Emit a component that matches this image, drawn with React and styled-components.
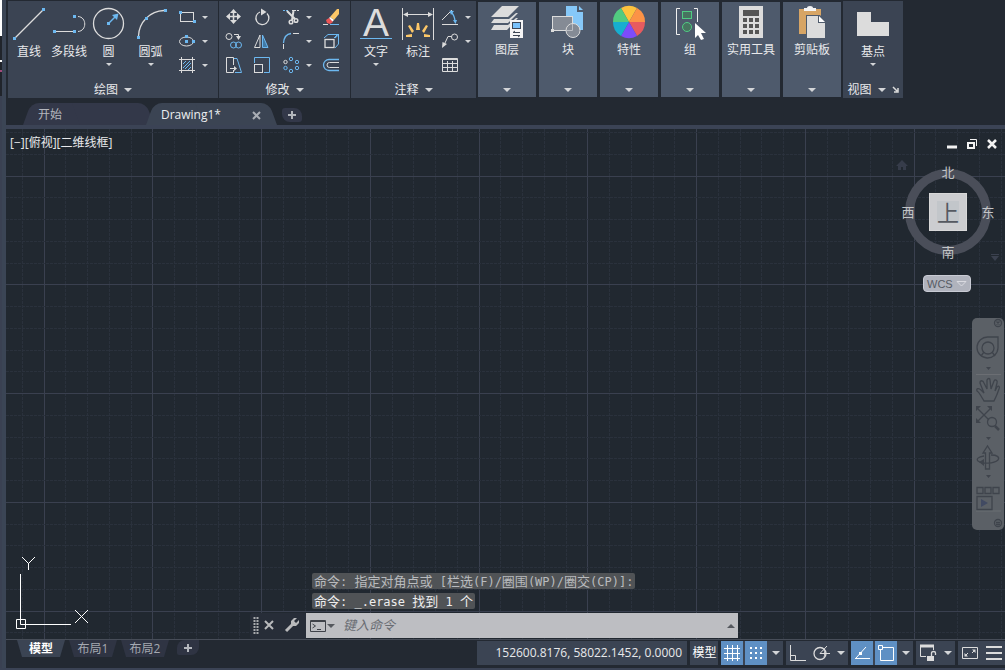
import { useEffect, useRef, useState } from "react";
import styled, { createGlobalStyle } from "styled-components";

const blue = "#6cb8f0";
const white = "#dcdcdc";

function Icon({ box, children }) {
  const [, , width, height] = box.split(" ");
  return (
    <svg width={width} height={height} viewBox={box} fill="none" stroke={white} aria-hidden="true">
      {children}
    </svg>
  );
}

// small blue grip points, centred on each pair
function Grips({ at }) {
  return at.map(([x, y]) => (
    <rect key={`${x}-${y}`} x={x - 1} y={y - 1} width="3" height="3" fill={blue} stroke="none" />
  ));
}

function LineIcon() {
  return (
    <Icon box="12 6 34 34">
      <path d="M15 38L43 10" strokeWidth="1.3" />
      <Grips at={[[14, 38], [43, 9]]} />
    </Icon>
  );
}

function PolylineIcon() {
  return (
    <Icon box="52 6 34 34">
      <path d="M55 31.5H74M78 16.5C87 17 87 31 78 31.5" />
      <Grips at={[[54, 31], [74, 31], [74, 16]]} />
    </Icon>
  );
}

function CircleIcon() {
  return (
    <Icon box="92 6 34 34">
      <circle cx="108.5" cy="23.5" r="15" strokeWidth="1.3" />
      <path d="M109 23L115 17" stroke={blue} strokeWidth="1.5" />
      <path d="M118.500 13.500L117 20L112 15Z" fill={blue} stroke="none" />
      <Grips at={[[108, 23]]} />
    </Icon>
  );
}

function ArcIcon() {
  return (
    <Icon box="134 6 34 34">
      <path d="M138.500 36C139 22 150 11 164 10.500" strokeWidth="1.3" />
      <Grips at={[[138, 37], [146, 18], [165, 10]]} />
    </Icon>
  );
}

function RectIcon() {
  return (
    <Icon box="178 8 18 18">
      <rect x="180.5" y="12.500" width="13" height="9" />
      <Grips at={[[180, 12], [194, 21]]} />
    </Icon>
  );
}

function EllipseIcon() {
  return (
    <Icon box="178 32 18 18">
      <ellipse cx="186.5" cy="41.500" rx="7" ry="4.5" />
      <Grips at={[[186, 36], [186, 41], [193, 41]]} />
    </Icon>
  );
}

function HatchIcon() {
  return (
    <Icon box="178 56 18 18">
      <path d="M179 59.500H195M179 70.500H195M181.500 57V73M192.500 57V73" />
      <path d="M183 64L186 61M183 68L190 61M185 69L191 63M188 70L191 67" stroke={blue} />
    </Icon>
  );
}

function MoveIcon() {
  return (
    <Icon box="223 8 18 18">
      <path d="M227 16.500H238M232.500 11V22" strokeWidth="1.5" />
      <path
        d="M232.500 9L236 13H229ZM232.500 24L236 20H229ZM225 16.500L229 13V20ZM240 16.500L236 13V20Z"
        fill={white}
        stroke="none"
      />
    </Icon>
  );
}

function RotateIcon() {
  return (
    <Icon box="252 8 18 18">
      <path d="M267 13.500A6.500 6.500 0 1 1 260 12" strokeWidth="1.300" />
      <path d="M261 8.500L266.500 12L261 15.500Z" fill={white} stroke="none" />
    </Icon>
  );
}

function TrimIcon() {
  return (
    <Icon box="282 8 18 18">
      <path d="M283 10.500H289" strokeDasharray="2 1" stroke={blue} />
      <path d="M292 10.500H299" strokeDasharray="4 1" />
      <path d="M287 11L295 19M293.500 11L292 20" strokeWidth="2" />
      <circle cx="291" cy="22" r="1.800" strokeWidth="1.500" />
      <circle cx="296" cy="20.500" r="1.800" strokeWidth="1.500" />
    </Icon>
  );
}

function EraseIcon() {
  return (
    <Icon box="323 8 18 18">
      <path d="M324 24.500H329" stroke={white} />
      <path d="M331 24.500H340" stroke={blue} />
      <path d="M331 17L338 9H340V14L335 20Z" fill="#fcc768" stroke="none" />
      <path d="M330 18L331 17L335 20L333 22Z" fill="#fff" stroke="none" />
      <path d="M327 20L330 18L334 22L331 24L328 23Z" fill="#ee5555" stroke="none" />
    </Icon>
  );
}

function CopyIcon() {
  return (
    <Icon box="223 32 18 18">
      <circle cx="228" cy="36.500" r="3" />
      <path d="M233 34.500H237.500V37" />
      <path d="M235 36H240L237.500 40Z" fill={white} stroke="none" />
      <circle cx="232.500" cy="45" r="3" stroke={blue} />
      <circle cx="237.500" cy="45" r="3" stroke={blue} />
    </Icon>
  );
}

function MirrorIcon() {
  return (
    <Icon box="252 32 18 18">
      <path d="M254.500 47.500L260 35V47.500Z" />
      <path d="M268 47.500L262.500 35V47.500Z" stroke={blue} fill="#4179a5" />
    </Icon>
  );
}

function FilletIcon() {
  return (
    <Icon box="282 32 18 18">
      <path d="M283.500 43C284 37 287 34 291 33.500" stroke={blue} strokeWidth="1.300" />
      <path d="M293 33.500H299M283.500 44V49" />
    </Icon>
  );
}

function ExplodeIcon() {
  return (
    <Icon box="323 32 18 18">
      <path d="M325 38L329 34.500H340L336 38M339.500 35V44L336 48M335 38L338 35" stroke={blue} />
      <rect x="326" y="39.500" width="9" height="8" strokeWidth="1.300" />
    </Icon>
  );
}

function StretchIcon() {
  return (
    <Icon box="223 56 18 18">
      <path d="M232.500 65V57.500H225.500V72.500H232.500V70" />
      <path d="M233 58.500H236L240.500 72.500H234" stroke={blue} />
      <path d="M229 68.500H234" />
      <path d="M233 66L236 68.500L233 71Z" fill={white} stroke="none" />
    </Icon>
  );
}

function ScaleIcon() {
  return (
    <Icon box="252 56 18 18">
      <path d="M254.500 63V57.500H269.500V72.500H264" stroke={blue} />
      <rect x="254.500" y="64.500" width="8" height="8" />
    </Icon>
  );
}

function ArrayIcon() {
  return (
    <Icon box="282 56 18 18">
      <circle cx="285.500" cy="62" r="1.700" />
      {[[291, 59], [297, 62], [297, 68], [291, 71], [285.5, 68]].map(([x, y]) => (
        <circle key={`${x}-${y}`} cx={x} cy={y} r="1.700" stroke={blue} />
      ))}
    </Icon>
  );
}

function OffsetIcon() {
  return (
    <Icon box="323 56 18 18">
      <path d="M340 59.500H330A5.500 5.500 0 0 0 330 70.500H340" stroke={blue} strokeWidth="1.300" />
      <path d="M340 62.500H330.500A2.500 2.500 0 0 0 330.500 67.500H340" />
    </Icon>
  );
}

function TextIcon() {
  return (
    <Icon box="359 6 34 34">
      <text x="376" y="36" fontSize="39" textAnchor="middle" fontFamily="Liberation Sans, sans-serif" fill={white} stroke="none">
        A
      </text>
      <path d="M360 38.500H392" stroke={blue} />
    </Icon>
  );
}

function DimensionIcon() {
  return (
    <Icon box="401 6 34 34">
      <path d="M402.500 8V40M433.500 8V40M404 14.500H432" />
      <path d="M403 14.500L408 12V17ZM433 14.500L428 12V17Z" fill={white} stroke="none" />
      <path
        d="M417 23H419L420 30H416ZM408 26L410 25L414 31L412 33ZM428 26L426 25L422 31L424 33ZM406 35L412 34V37H406ZM430 35L424 34V37H430Z"
        fill="#fcc768"
        stroke="none"
      />
    </Icon>
  );
}

function AngleIcon() {
  return (
    <Icon box="441 8 18 18">
      <path d="M442 24.500H458M442 20L452 10" />
      <path d="M451 12C454 15 455 18 455 22" stroke={blue} strokeWidth="1.300" />
      <path d="M449.500 10.500L454 11L451 15ZM453 20H457L455.500 24Z" fill={blue} stroke="none" />
    </Icon>
  );
}

function LeaderIcon() {
  return (
    <Icon box="441 32 18 18">
      <circle cx="454.500" cy="37" r="3" />
      <path d="M451.500 36.500H448L444.500 44" />
      <path d="M442 48L442.500 42L447 44Z" fill={white} stroke="none" />
    </Icon>
  );
}

function TableIcon() {
  return (
    <Icon box="441 56 18 18">
      <path d="M442.500 58.500H457.500V71.500H442.500ZM442 59.500H458M442 63.500H458M442 67.500H458M447.500 61V71M452.500 61V71" />
    </Icon>
  );
}

function LayersIcon() {
  return (
    <Icon box="491 6 32 32">
      <g fill={white} stroke="none">
        <path d="M502 6H519L508 17H491Z" />
        <path d="M516 13H518L508 23H491L494 19H509Z" />
        <path d="M516 18H518L507 30H491L494 25H508Z" />
      </g>
      <rect x="510" y="20" width="13" height="18" fill="#f5f5f5" stroke="none" />
      <rect x="512.500" y="22.500" width="8" height="6" fill="#79c2fb" stroke="#3d4654" />
      <path d="M513 32.500H520M513 35.500H520M515 31L513 32.500M518 37L520 35.500" stroke="#3d4654" />
    </Icon>
  );
}

function BlockIcon() {
  return (
    <Icon box="552 6 34 32">
      <path d="M567 6H578V12H584V30H567Z" fill="#86c8f8" stroke="none" />
      <path d="M580 6L584 10H580Z" fill="#86c8f8" stroke="none" />
      <rect x="553.500" y="16.500" width="20" height="14" fill="#858b95" />
      <circle cx="574" cy="30.500" r="7" fill="#858b95" />
      <path d="M567 30.500H573.500V24" stroke="#b9bcc2" />
      <rect x="552" y="29" width="3" height="3" fill={white} stroke="none" />
    </Icon>
  );
}

function WheelIcon() {
  return (
    <Icon box="613 6 32 32">
      <g stroke="none">
        <path d="M629 22L621 8A16 16 0 0 1 637 8Z" fill="#fdc23e" />
        <path d="M629 22L637 8A16 16 0 0 1 645 22Z" fill="#fc9346" />
        <path d="M629 22H645A16 16 0 0 1 637 36Z" fill="#e75b5f" />
        <path d="M629 22L637 36A16 16 0 0 1 621 36Z" fill="#7d4cfa" />
        <path d="M629 22L621 36A16 16 0 0 1 613 22Z" fill="#17aed0" />
        <path d="M629 22H613A16 16 0 0 1 621 8Z" fill="#51cb80" />
      </g>
    </Icon>
  );
}

function GroupIcon() {
  return (
    <Icon box="674 4 32 36">
      <path d="M680 6.500H676.500V32.500H680M694 6.500H697.500V20" stroke="#f0f0f0" />
      <rect x="682.500" y="9.500" width="9" height="7" fill="#47745f" stroke="#50cc83" />
      <circle cx="687" cy="25" r="4.500" fill="#47745f" stroke="#50cc83" />
      <path d="M695 21V36L698 33L701 38L704 37L701 31H706Z" fill="#fff" stroke="none" />
    </Icon>
  );
}

function CalculatorIcon() {
  return (
    <Icon box="735 6 32 32">
      <rect x="739" y="6" width="24" height="32" fill={white} stroke="none" />
      <rect x="743" y="10" width="16" height="6" fill="#555" stroke="none" />
      {[18, 24, 30].map(y =>
        [743, 749, 755].map(x => (
          <rect key={`${x}-${y}`} x={x} y={y} width="4" height="4" fill="#555" stroke="none" />
        ))
      )}
    </Icon>
  );
}

function ClipboardIcon() {
  return (
    <Icon box="796 6 32 32">
      <g stroke="none">
        <rect x="799" y="9" width="22" height="25" fill="#d7a565" />
        <path d="M804 8H807Q807 6 810 6Q813 6 813 8H816V11H804Z" fill="#f5f5f5" />
        <path d="M806 15H820L826 22V38H806Z" fill="#4e5a6b" />
        <path d="M807 16H818V23H825V38H807Z" fill={white} />
        <path d="M819 16L825 22H819Z" fill="#fff" />
      </g>
    </Icon>
  );
}

function BaseIcon() {
  return (
    <Icon box="856 6 34 34">
      <path d="M857 12H871V22H889V36H857Z" fill={white} stroke="none" />
    </Icon>
  );
}

const drawTools = [
  { name: "直线", icon: <LineIcon />, width: 42 },
  { name: "多段线", icon: <PolylineIcon />, width: 38 },
  { name: "圆", icon: <CircleIcon />, width: 41, menu: true },
  { name: "圆弧", icon: <ArcIcon />, width: 43, menu: true },
];

const drawSmall = [
  { name: "矩形", icon: <RectIcon /> },
  { name: "椭圆", icon: <EllipseIcon /> },
  { name: "图案填充", icon: <HatchIcon /> },
];

const modifyRows = [
  [["移动", <MoveIcon />], ["旋转", <RotateIcon />], ["修剪", <TrimIcon />], ["删除", <EraseIcon />]],
  [["复制", <CopyIcon />], ["镜像", <MirrorIcon />], ["圆角", <FilletIcon />], ["分解", <ExplodeIcon />]],
  [["拉伸", <StretchIcon />], ["缩放", <ScaleIcon />], ["阵列", <ArrayIcon />], ["偏移", <OffsetIcon />]],
];

const annotateSmall = [
  { name: "角度", icon: <AngleIcon /> },
  { name: "引线", icon: <LeaderIcon /> },
  { name: "表格", icon: <TableIcon />, plain: true },
];

const collapsedPanels = [
  { name: "图层", icon: <LayersIcon /> },
  { name: "块", icon: <BlockIcon /> },
  { name: "特性", icon: <WheelIcon /> },
  { name: "组", icon: <GroupIcon /> },
  { name: "实用工具", icon: <CalculatorIcon /> },
  { name: "剪贴板", icon: <ClipboardIcon /> },
];

function Tool({ name, icon, width, menu }) {
  return (
    <BigTool $width={width}>
      {icon}
      <span>{name}</span>
      {menu && <Caret $small />}
    </BigTool>
  );
}

function SmallTools({ items }) {
  return (
    <SmallGrid>
      {items.map(item => (
        <SmallRow key={item.name}>
          <IconButton aria-label={item.name}>{item.icon}</IconButton>
          {!item.plain && <Caret $small />}
        </SmallRow>
      ))}
    </SmallGrid>
  );
}

function Ribbon() {
  return (
    <RibbonBar>
      <Panel $width={210}>
        <PanelBody>
          {drawTools.map(tool => (
            <Tool key={tool.name} {...tool} />
          ))}
          <SmallTools items={drawSmall} />
        </PanelBody>
        <PanelTitle>绘图<Caret /></PanelTitle>
      </Panel>

      <Panel $width={131}>
        <ModifyGrid>
          {modifyRows.map((row, r) =>
            row.map(([name, icon], i) => [
              <IconButton key={name} aria-label={name}>{icon}</IconButton>,
              i === 2 && <Caret key={`menu${r}`} $small />,
            ])
          )}
        </ModifyGrid>
        <PanelTitle>修改<Caret /></PanelTitle>
      </Panel>

      <Panel $width={125}>
        <PanelBody>
          <Tool name="文字" icon={<TextIcon />} width={50} menu />
          <Tool name="标注" icon={<DimensionIcon />} width={34} />
          <SmallTools items={annotateSmall} />
        </PanelBody>
        <PanelTitle>注释<Caret /></PanelTitle>
      </Panel>

      <CollapsedList>
        {collapsedPanels.map(panel => (
          <Collapsed key={panel.name}>
            <CollapsedIcon>{panel.icon}</CollapsedIcon>
            <span>{panel.name}</span>
            <Caret />
          </Collapsed>
        ))}
      </CollapsedList>

      <Panel $width={60}>
        <PanelBody>
          <Tool name="基点" icon={<BaseIcon />} width={60} menu />
        </PanelBody>
        <PanelTitle>
          视图
          <Caret />
          <Icon box="0 0 7 7">
            <path d="M1 1L5 5M6 2V6H2" strokeWidth="1.500" />
          </Icon>
        </PanelTitle>
      </Panel>
    </RibbonBar>
  );
}

// grid spacing and origin of the model space, a major line every fifth step
const step = 21.75;

function DrawingGrid() {
  const ref = useRef(null);
  const [size, setSize] = useState({ width: 1000, height: 510 });

  useEffect(() => {
    const observer = new ResizeObserver(([entry]) => {
      setSize({ width: entry.contentRect.width, height: entry.contentRect.height });
    });
    observer.observe(ref.current);
    return () => observer.disconnect();
  }, []);

  const lines = [];
  for (let i = -2; 38 + i * step < size.width; i++) {
    const x = Math.floor(38 + i * step) + 0.5;
    lines.push({ key: `v${i}`, major: i % 5 === 0, d: `M${x} 0V${size.height}` });
  }
  for (let i = -2; 47 + i * step < size.height; i++) {
    const y = Math.floor(47 + i * step) + 0.5;
    lines.push({ key: `h${i}`, major: i % 5 === 0, d: `M0 ${y}H${size.width}` });
  }

  return (
    <GridLayer ref={ref}>
      <svg width="100%" height="100%" fill="none" aria-hidden="true">
        {lines.map(line => (
          <path
            key={line.key}
            d={line.d}
            stroke={line.major ? "#3a404f" : "#2a313c"}
            strokeDasharray={line.major ? undefined : "3 1"}
          />
        ))}
      </svg>
    </GridLayer>
  );
}

function ViewCube() {
  return (
    <Compass>
      <Ring />
      <Direction $area="n">北</Direction>
      <Direction $area="w">西</Direction>
      <CubeFace>上</CubeFace>
      <Direction $area="e">东</Direction>
      <Direction $area="s">南</Direction>
    </Compass>
  );
}

function NavigationBar() {
  return (
    <NavBar aria-label="导航栏">
      <Icon box="974 319 28 210">
        <g stroke="#3f444c" strokeWidth="1.300">
          <circle cx="998" cy="323" r="3.500" />
          <path d="M996.500 321.500L999.500 324.500M999.500 321.500L996.500 324.500" />
          <path d="M988 337H998V348A10.500 10.500 0 1 1 988 337Z" />
          <circle cx="988" cy="348" r="6" />
          <path d="M981 356L984 352M995 356L992 352" />
          <path d="M976 374.500H1001M976 511H1001" stroke="#6b6e73" strokeWidth="1" />
          <path d="M984 401C981 396 979 392 977 391C976 388 979 388 981 390L984 393L980 383C980 380 983 380 984 383L987 389V380C988 378 990 378 990 380L991 389L994 381C995 379 998 380 997 383L995 391L997 387C999 385 1000 387 999 389C997 395 996 397 994 401Z" />
          <path d="M978 409L989 420M978 421L991 408" />
          <circle cx="992" cy="422" r="4.500" />
          <path d="M995 426L999 430" strokeWidth="2.500" />
          <path d="M985.500 453H983L987.500 446L992 453H989.500V469H985.500Z" />
          <path d="M984 456C978 457 976 459 978 461C982 464 994 464 998 460C1000 457 997 455 991 455" />
          <path d="M977 487.500H983V493.500H977ZM985 487.500H991V493.500H985ZM993 487.500H999V493.500H993Z" />
          <path d="M977 496.500H992V509.500H977Z" />
          <circle cx="998" cy="523" r="3.500" />
          <path d="M996 522.500H1000M996 524.500H1000" />
        </g>
        <g fill="#3f444c" stroke="none">
          <path d="M986 367H991L988.500 370ZM986 437H991L988.500 440ZM986 475H991L988.500 478Z" />
          <path d="M976 406H981L976 411ZM992 406V411L987 406ZM976 423V418L981 423ZM979 462L984 459V466Z" />
          <path d="M981 499L988 503L981 507Z" fill="#414a62" />
        </g>
      </Icon>
    </NavBar>
  );
}

// CJK runs are set one size larger than the monospaced ASCII runs
function HistoryLine({ text, dim }) {
  return (
    <HistoryText $dim={dim}>
      {text.split(/([\x20-\x7e]+)/).map((part, i) => (i % 2 ? <code key={i}>{part}</code> : part))}
    </HistoryText>
  );
}

function CommandLine() {
  const [command, setCommand] = useState("");

  return (
    <CommandArea>
      <HistoryLine dim text="命令: 指定对角点或 [栏选(F)/圈围(WP)/圈交(CP)]:" />
      <HistoryLine text="命令: _.erase 找到 1 个" />
      <CommandBar>
        <CommandTools>
          <Icon box="0 0 6 18">
            <path d="M1.500 1V18M4.500 1V18" strokeWidth="2" strokeDasharray="2 1" stroke="#a9abae" />
          </Icon>
          <IconButton aria-label="关闭">
            <Icon box="0 0 10 10">
              <path d="M1 1L9 9M9 1L1 9" strokeWidth="2" stroke="#b9babc" />
            </Icon>
          </IconButton>
          <WrenchButton aria-label="自定义">
            <Icon box="0 0 16 16">
              <path d="M2 14L10 6" strokeWidth="3" stroke="#b9babc" />
              <path d="M13 1L10 4L12 6L15 3V6L12 9H9L7 7V4L10 1Z" fill="#b9babc" stroke="none" />
            </Icon>
          </WrenchButton>
        </CommandTools>
        <CommandField>
          <Icon box="310 619 17 14">
            <path d="M310.500 620.500H325.500V631.500H310.500ZM310 621.500H326" stroke="#3f4249" />
            <path d="M312.500 624L315.500 626L312.500 628M317 629.500H321" stroke="#3f4249" />
          </Icon>
          <Caret $color="#55585e" />
          <input
            aria-label="命令"
            placeholder="键入命令"
            value={command}
            onChange={e => setCommand(e.target.value)}
          />
          <Caret $up $color="#55585e" />
        </CommandField>
      </CommandBar>
    </CommandArea>
  );
}

function StatusBar() {
  return (
    <Status>
      <Layouts>
        <LayoutTab $active>模型</LayoutTab>
        <LayoutTab>布局1</LayoutTab>
        <LayoutTab>布局2</LayoutTab>
        <AddLayout aria-label="新建布局"><PlusIcon /></AddLayout>
      </Layouts>

      <StatusGroups>
        <Coordinates>152600.8176, 58022.1452, 0.0000</Coordinates>
        <ModelButton>模型</ModelButton>
        <Group>
          <StatusButton $on aria-label="栅格">
            <Icon box="0 0 18 18">
              <path d="M1 4.500H17M1 9.500H17M1 14.500H17M4.500 1V17M9.500 1V17M14.500 1V17" stroke="#fff" />
            </Icon>
          </StatusButton>
          <StatusButton $on aria-label="捕捉">
            <Icon box="0 0 16 16">
              <path d="M2 3H15M2 8H15M2 13H15" stroke="#fff" strokeWidth="2" strokeDasharray="2 3" />
            </Icon>
          </StatusButton>
          <MenuButton aria-label="捕捉设置"><Caret /></MenuButton>
        </Group>
        <Group>
          <StatusButton aria-label="正交">
            <Icon box="0 0 18 18">
              <path d="M2.500 1V16.500H18M2.500 11.500H7.500V16.500" />
            </Icon>
          </StatusButton>
          <StatusButton aria-label="极轴">
            <Icon box="0 0 18 18">
              <circle cx="8" cy="9.500" r="6" strokeWidth="1.300" />
              <path d="M8 9.500H18M8 9.500L15 2M12 6C13 8 13 11 12 13" />
            </Icon>
          </StatusButton>
          <MenuButton aria-label="极轴设置"><Caret /></MenuButton>
        </Group>
        <Group>
          <StatusButton $on aria-label="对象捕捉追踪">
            <Icon box="0 0 18 18">
              <path d="M2 14.500H17M3 14L13 3" stroke="#fff" />
              <rect x="6" y="8" width="3" height="3" fill="#fff" stroke="none" />
            </Icon>
          </StatusButton>
          <StatusButton $on aria-label="对象捕捉">
            <Icon box="0 0 18 18">
              <path d="M1.500 1.500H5.500V5.500H1.500ZM6 3.500H16.500V16.500H3.500V6" stroke="#fff" />
            </Icon>
          </StatusButton>
          <MenuButton aria-label="对象捕捉设置"><Caret /></MenuButton>
        </Group>
        <Group $pad>
          <StatusButton aria-label="锁定界面">
            <Icon box="0 0 18 18">
              <path d="M1 2H15" strokeWidth="3" />
              <path d="M1.500 2V12.500H7M14.500 3V6" />
              <rect x="8" y="12" width="7" height="5" fill={white} stroke="none" />
              <path d="M12.500 12V9C12.500 7 16.500 7 16.500 9V11" strokeWidth="1.300" />
            </Icon>
          </StatusButton>
          <MenuButton aria-label="锁定设置"><Caret /></MenuButton>
        </Group>
        <Group $pad>
          <StatusButton aria-label="全屏显示">
            <Icon box="0 0 18 18">
              <path d="M1.500 3.500H16.500V14.500H1.500ZM4 12L7 9M14 6L11 9" />
              <path d="M3.500 9V12.500H7ZM11 5.500H14.500V9Z" fill={white} stroke="none" />
            </Icon>
          </StatusButton>
          <StatusButton aria-label="自定义">
            <Icon box="0 0 18 18">
              <path d="M1 3H17M1 9H17M1 15H17" strokeWidth="2" />
            </Icon>
          </StatusButton>
        </Group>
      </StatusGroups>
    </Status>
  );
}

function PlusIcon() {
  return (
    <Icon box="0 0 8 8">
      <path d="M0 4H8M4 0V8" strokeWidth="2" stroke="#b4b7bd" />
    </Icon>
  );
}

export default function App() {
  return (
    <Main>
      <GlobalStyle />
      <Edge />
      <Window>
        <Ribbon />

        <FileTabs>
          <FileTab>开始</FileTab>
          <FileTab $active>
            Drawing1*
            <Icon box="0 0 9 9">
              <path d="M1 1L8 8M8 1L1 8" strokeWidth="2" stroke="#a9adb4" />
            </Icon>
          </FileTab>
          <AddFile aria-label="新图形"><PlusIcon /></AddFile>
        </FileTabs>

        <Canvas>
          <DrawingGrid />
          <ViewLabel>[−][俯视][二维线框]</ViewLabel>
          <WindowButtons>
            <IconButton aria-label="最小化">
              <Icon box="0 0 12 12"><path d="M1 9H11" strokeWidth="3" stroke="#f2f2f2" /></Icon>
            </IconButton>
            <IconButton aria-label="还原">
              <Icon box="0 0 12 12">
                <path d="M2 5H8V10H2Z" strokeWidth="2" stroke="#f2f2f2" />
                <path d="M4 1.500H10.500V8" stroke="#f2f2f2" />
              </Icon>
            </IconButton>
            <IconButton aria-label="关闭">
              <Icon box="0 0 12 12"><path d="M2 2L10 10M10 2L2 10" strokeWidth="2.500" stroke="#f2f2f2" /></Icon>
            </IconButton>
          </WindowButtons>
          <HomeButton aria-label="主视图">
            <Icon box="0 0 12 12">
              <path d="M6 1L12 7H10V11H7V8H5V11H2V7H0Z" fill="#363c4a" stroke="none" />
            </Icon>
          </HomeButton>
          <ViewCube />
          <CubeMenu aria-label="视图选项">
            <Icon box="0 0 8 7">
              <path d="M0 0H8V1H0ZM0 2H8L4 7Z" fill="#3b414f" stroke="none" />
            </Icon>
          </CubeMenu>
          <WcsButton>
            WCS
            <Icon box="0 0 11 7"><path d="M1 1.500H10L5.500 6Z" stroke="#d9dae0" /></Icon>
          </WcsButton>
          <NavigationBar />
          <UcsIcon>
            <Icon box="14 554 78 76">
              <g stroke="#fff">
                <path d="M22 557L28.500 563.500L35 557M28.500 563V570" />
                <path d="M20.500 574V624.500H71M16.500 619.500H25.500V628.500H16.500Z" />
                <path d="M75 610L88 623M88 610L75 623" />
              </g>
            </Icon>
          </UcsIcon>
          <CommandLine />
        </Canvas>

        <StatusBar />
      </Window>
    </Main>
  );
}

const GlobalStyle = createGlobalStyle`
  * {
    box-sizing: border-box;
  }

  body {
    margin: 0;
    background: #232932;
    color: #e8e9eb;
    font: 12px/20px "Open Sans", "Noto Sans CJK SC", sans-serif;
  }

  button {
    margin: 0;
    padding: 0;
    border: none;
    background: none;
    color: inherit;
    font: inherit;
    cursor: pointer;
  }

  svg {
    display: block;
    flex: none;
    overflow: visible;
  }
`;

const Main = styled.div`
  min-height: 100vh;
  display: flex;
  border-bottom: 2px solid #3b4355;
`;

const Edge = styled.div`
  flex: none;
  width: 6px;
  border-right: 4px solid #3b4555;
  background: linear-gradient(#fff 36px, #20242b 36px 60px, #fff 60px 62px, #20242b 62px 70px, #a24b7c 70px 72px, #20242b 72px 96px, #3a4152 96px);
`;

const Window = styled.div`
  flex: 1;
  min-width: 0;
  display: flex;
  flex-direction: column;
`;

const RibbonBar = styled.header`
  height: 98px;
  display: flex;
  padding: 1px 0 0 2px;
  gap: 2px;
`;

const Panel = styled.section`
  flex: none;
  width: ${props => props.$width}px;
  display: flex;
  flex-direction: column;
  background: #3b4453;

  & + & {
    margin-left: -1px;
  }
`;

const PanelBody = styled.div`
  flex: 1;
  display: flex;
`;

const PanelTitle = styled.div`
  height: 17px;
  display: flex;
  align-items: center;
  justify-content: center;
  gap: 6px;
`;

const BigTool = styled.button`
  flex: none;
  width: ${props => props.$width}px;
  padding-top: 5px;
  display: flex;
  flex-direction: column;
  align-items: center;
  white-space: nowrap;

  span {
    line-height: 23px;
  }
`;

const Caret = styled.i`
  flex: none;
  justify-self: center;
  width: 0;
  height: 0;
  border: solid transparent;
  border-width: ${props => (props.$small ? "0 3px" : "0 4px")};
  ${props => (props.$up ? "border-bottom" : "border-top")}: ${props => (props.$small ? 3 : 4)}px solid
    ${props => props.$color || "#d3d5d8"};
`;

const SmallGrid = styled.div`
  flex: 1;
  padding: 4px 0 0 6px;
  display: flex;
  flex-direction: column;
`;

const SmallRow = styled.div`
  height: 24px;
  display: flex;
  align-items: center;
  gap: 6px;
`;

const IconButton = styled.button`
  display: flex;
  align-items: center;
  justify-content: center;
`;

const ModifyGrid = styled.div`
  flex: 1;
  padding-top: 4px;
  display: grid;
  grid-template-columns: 27px 30px 30px 6px 38px;
  grid-auto-rows: 24px;
  align-items: center;
`;

const CollapsedList = styled.div`
  display: flex;
  gap: 3px;
  padding: 1px 0 1px;
`;

const Collapsed = styled.button`
  width: 58px;
  padding: 4px 0 5px;
  display: flex;
  flex-direction: column;
  align-items: center;
  background: #4e5a6c;
  white-space: nowrap;

  i {
    margin-top: auto;
  }
`;

const CollapsedIcon = styled.span`
  height: 34px;
  display: flex;
  align-items: flex-start;
`;

const FileTabs = styled.nav`
  height: 27px;
  padding: 5px 0 0 21px;
  display: flex;
`;

const FileTab = styled.button`
  position: relative;
  z-index: 0;
  width: 123px;
  padding: 2px 12px 0 11px;
  display: flex;
  align-items: center;
  justify-content: space-between;
  color: ${props => (props.$active ? "#eceef0" : "#b3b6bd")};

  &::before,
  &::after {
    content: "";
    position: absolute;
    z-index: -1;
    top: 0;
    bottom: 0;
    background: ${props => (props.$active ? "#3b4453" : "#333849")};
  }

  &::before {
    left: 0;
    right: 50%;
    border-radius: 8px 0 0 0;
    transform: skewX(-20deg);
  }

  &::after {
    left: 40%;
    right: 0;
    border-radius: 0 8px 0 0;
    transform: skewX(20deg);
  }
`;

const AddFile = styled.button`
  width: 20px;
  height: 14px;
  margin: 5px 0 0 9px;
  display: flex;
  align-items: center;
  justify-content: center;
  background: #333849;
  border-radius: 3px 8px 3px 8px;
`;

const Canvas = styled.main`
  position: relative;
  flex: 1;
  min-height: 510px;
  border-top: 4px solid #3b4355;
  border-bottom: 1px solid #474d58;
  background: #212830;
`;

const GridLayer = styled.div`
  position: absolute;
  inset: 0;
  overflow: hidden;
`;

const ViewLabel = styled.div`
  position: absolute;
  top: 4px;
  left: 4px;
`;

const WindowButtons = styled.div`
  position: absolute;
  top: 9px;
  right: 7px;
  display: flex;
  gap: 8px;
`;

const HomeButton = styled(IconButton)`
  position: absolute;
  top: 30px;
  right: 97px;
`;

const Compass = styled.div`
  position: absolute;
  top: 33px;
  right: 7px;
  display: grid;
  grid-template: ". n ." 20px "w c e" 60px ". s ." 20px / 20px 60px 20px;
  place-items: center;
`;

const Ring = styled.div`
  position: absolute;
  inset: 7px;
  border: 9px solid #4a4e59;
  border-radius: 50%;
`;

const Direction = styled.button`
  position: relative;
  grid-area: ${props => props.$area};
  color: #c3c4c6;
  font-size: 13px;
`;

const CubeFace = styled.button`
  grid-area: c;
  width: 38px;
  height: 38px;
  border: 1px solid #d8d8d8;
  background: linear-gradient(#c2c6ca, #c2c6ca) center / 22px 22px no-repeat, #cccdd0;
  color: #555961;
  font-size: 22px;
  line-height: 32px;
`;

const CubeMenu = styled(IconButton)`
  position: absolute;
  top: 125px;
  right: 6px;
`;

const WcsButton = styled.button`
  position: absolute;
  top: 146px;
  right: 34px;
  width: 48px;
  height: 17px;
  padding: 0 3px;
  display: flex;
  align-items: center;
  justify-content: space-between;
  border: 1px solid #c9cbd4;
  border-radius: 4px;
  background: #b0b3bd;
  color: #575b64;
  font: 11px/14px "Liberation Sans", sans-serif;
`;

const NavBar = styled.aside`
  position: absolute;
  top: 189px;
  right: 1px;
  padding: 1px 2px;
  border-radius: 5px;
  background: #5b6066;
`;

const UcsIcon = styled.div`
  position: absolute;
  left: 8px;
  bottom: 9px;
`;

const CommandArea = styled.div`
  position: absolute;
  left: 244px;
  right: 267px;
  bottom: 0;
  display: flex;
  flex-direction: column;
  align-items: flex-start;
`;

const HistoryText = styled.div`
  height: 16px;
  margin: 0 0 4px 62px;
  padding: 0 2px;
  border-radius: 2px;
  background: #505356;
  color: ${props => (props.$dim ? "#b9bbbe" : "#eeeeee")};
  font-size: 13px;
  line-height: 16px;
  white-space: pre;

  code {
    font: 12px/16px "DejaVu Sans Mono", monospace;
  }
`;

const CommandBar = styled.div`
  align-self: stretch;
  height: 26px;
  display: flex;
`;

const CommandTools = styled.div`
  width: 56px;
  padding: 0 6px 2px 3px;
  display: flex;
  align-items: center;
  gap: 5px;
  background: #272d38;
  border-radius: 3px 0 0 3px;
`;

const WrenchButton = styled(IconButton)`
  margin-left: auto;
`;

const CommandField = styled.label`
  flex: 1;
  height: 25px;
  padding: 0 3px 0 4px;
  display: flex;
  align-items: center;
  background: #bdbec2;

  input {
    flex: 1;
    min-width: 0;
    padding: 0 0 2px 8px;
    border: none;
    outline: none;
    background: none;
    color: #33363c;
    font: italic 13px/20px "Open Sans", "Noto Sans CJK SC", sans-serif;
  }

  input::placeholder {
    color: #696c72;
    opacity: 1;
  }
`;

const Status = styled.footer`
  height: 28px;
  display: flex;
  justify-content: space-between;
`;

const Layouts = styled.nav`
  display: flex;
  align-items: flex-start;
  gap: 4px;
  padding-left: 11px;
`;

const LayoutTab = styled.button`
  height: 17px;
  width: 48px;
  line-height: 17px;
  color: ${props => (props.$active ? "#ffffff" : "#a5a9b1")};
  font-weight: ${props => (props.$active ? 600 : 400)};
  background: ${props => (props.$active ? "#3b4453" : "#2f3443")};
  clip-path: polygon(0 0, 100% 0, calc(100% - 5px) 100%, 5px 100%);
`;

const AddLayout = styled.button`
  width: 22px;
  height: 15px;
  margin-left: 4px;
  display: flex;
  align-items: center;
  justify-content: center;
  background: #2f3443;
  border-radius: 8px 0 8px 2px;
`;

const StatusGroups = styled.div`
  display: flex;
  gap: 3px;
  height: 26px;
  padding: 1px 0;
`;

const Coordinates = styled.div`
  width: 210px;
  padding-right: 5px;
  background: #3b4453;
  text-align: right;
  line-height: 23px;
`;

const ModelButton = styled.button`
  width: 28px;
  padding-left: 1px;
  background: #3b4453;
  color: #fff;
`;

const Group = styled.div`
  display: flex;
  gap: 2px;
  padding-left: ${props => (props.$pad ? 1 : 0)}px;
  background: #3b4453;
`;

const StatusButton = styled(IconButton)`
  width: 22px;
  background: ${props => (props.$on ? "#5f90c4" : "none")};
`;

const MenuButton = styled(IconButton)`
  width: 14px;
`;
